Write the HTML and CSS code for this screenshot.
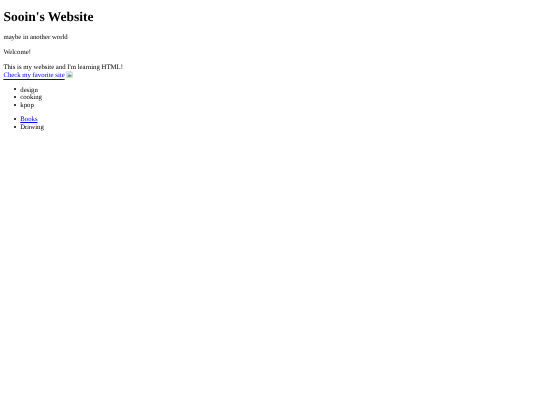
FILE: index.html
```html
<!DOCTYPE html>
<html lang="en">
<head>
    <meta charset="UTF-8">
    <title>Sooin's Website</title>
    <link rel="stylesheet" href="styles.css">
</head>
<body>
    <h1>Sooin's Website</h1>
    <p>maybe in another world</p>
    <p>Welcome!</p>
    <p class="intro">
        This is my website and I'm learning HTML!<br>
        <a href="#">Check my favorite site</a>
        <svg class="broken-img" viewBox="0 0 16 16" aria-label="broken image">
            <path d="M1.5 .5H11L15.5 5V15.5H1.5Z" fill="#fff" stroke="#a9a9a9"/>
            <path d="M11 .5V5H15.5" fill="#e8e8e8" stroke="#a9a9a9"/>
            <path d="M3 3H9V7H13V8L9 13H3Z" fill="#c3d9f5"/>
            <path d="M3 13L7 8L10 10L13 8V13.5H3Z" fill="#4fa64f"/>
        </svg>
    </p>
    <ul>
        <li>design</li>
        <li>cooking</li>
        <li>kpop</li>
    </ul>
    <ul>
        <li><a href="#">Books</a></li>
        <li>Drawing</li>
    </ul>
</body>
</html>
```

FILE: styles.css
```css
html { background: #fff; }
body {
    margin: 0 3.375px;
    font-family: "Liberation Serif", serif;
    font-size: 6.75px;
    line-height: 7.7px;
    color: #000;
    text-rendering: geometricPrecision;
    filter: blur(0.3px);
}
h1 { font-size: 13.5px; line-height: 15.5px; margin: 9px 0 9.4px; }
p { margin: 7.2px 0; }
.intro { margin-bottom: 6.3px; }
ul { margin: 6.3px 0 6.75px; padding-left: 16.875px; list-style: none; }
li::before {
    content: "";
    display: inline-block;
    width: 2px;
    height: 2px;
    margin-left: -6px;
    margin-right: 4px;
    border-radius: 50%;
    background: #000;
    vertical-align: 1.5px;
}
a { color: #00e; }
.broken-img { width: 6.75px; height: 6.75px; vertical-align: -0.5px; }
```
